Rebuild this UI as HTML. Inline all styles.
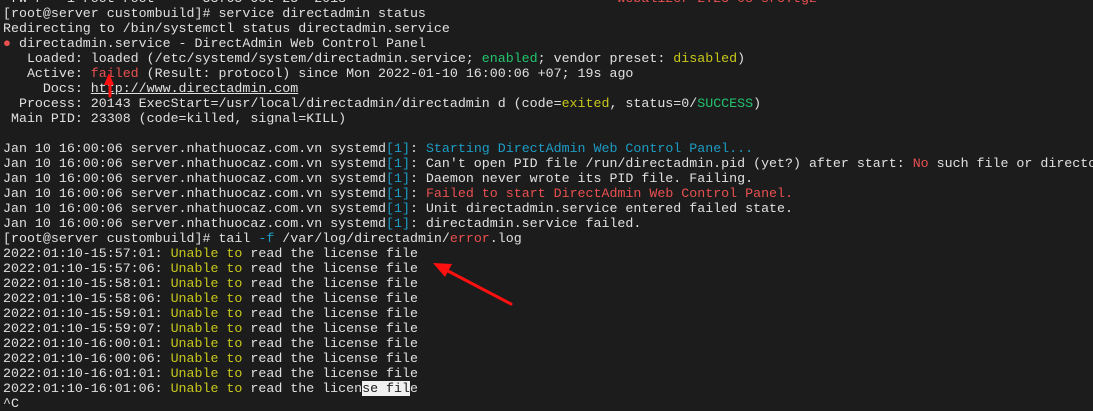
<!DOCTYPE html>
<html><head><meta charset="utf-8"><style>
html,body{margin:0;padding:0;background:#1c1c1c;width:1093px;height:409px;overflow:hidden}
pre{position:absolute;left:3px;top:-9px;margin:0;font-family:"Liberation Mono","DejaVu Sans Mono",monospace;font-size:13.3px;line-height:15px;color:#e0e0e0;white-space:pre}
.r{color:#e85050}.g{color:#22c46e}.y{color:#c8c81c}.c{color:#1c9cc4}
.u{text-decoration:underline}
.sel{background:#f0f0f0;color:#1c1c1c}
svg{position:absolute;left:0;top:0}
</style></head><body>
<pre>-rw-r-- 1 root root      53765 Oct 25  2018                                  <span class="r">webalizer-2.23-08-src.tgz</span>
[root@server custombuild]# service directadmin status
Redirecting to /bin/systemctl status directadmin.service
<span class="r">●</span> directadmin.service - DirectAdmin Web Control Panel
   Loaded: loaded (/etc/systemd/system/directadmin.service; <span class="g">enabled</span>; vendor preset: <span class="y">disabled</span>)
   Active: <span class="r">failed</span> (Result: protocol) since Mon 2022-01-10 16:00:06 +07; 19s ago
     Docs: <span class="u">http://www.directadmin.com</span>
  Process: 20143 ExecStart=/usr/local/directadmin/directadmin d (code=<span class="y">exited</span>, status=0/<span class="g">SUCCESS</span>)
 Main PID: 23308 (code=killed, signal=KILL)

Jan 10 16:00:06 server.nhathuocaz.com.vn systemd<span class="c">[1]</span>: <span class="c">Starting DirectAdmin Web Control Panel...</span>
Jan 10 16:00:06 server.nhathuocaz.com.vn systemd<span class="c">[1]</span>: Can't open PID file /run/directadmin.pid (yet?) after start: <span class="r">No</span> such file or directory
Jan 10 16:00:06 server.nhathuocaz.com.vn systemd<span class="c">[1]</span>: Daemon never wrote its PID file. Failing.
Jan 10 16:00:06 server.nhathuocaz.com.vn systemd<span class="c">[1]</span>: <span class="r">Failed to start DirectAdmin Web Control Panel.</span>
Jan 10 16:00:06 server.nhathuocaz.com.vn systemd<span class="c">[1]</span>: Unit directadmin.service entered failed state.
Jan 10 16:00:06 server.nhathuocaz.com.vn systemd<span class="c">[1]</span>: directadmin.service failed.
[root@server custombuild]# tail <span class="c">-f</span> /var/log/directadmin/<span class="r">error</span>.log
2022:01:10-15:57:01: <span class="y">Unable to</span> read the license file
2022:01:10-15:57:06: <span class="y">Unable to</span> read the license file
2022:01:10-15:58:01: <span class="y">Unable to</span> read the license file
2022:01:10-15:58:06: <span class="y">Unable to</span> read the license file
2022:01:10-15:59:01: <span class="y">Unable to</span> read the license file
2022:01:10-15:59:07: <span class="y">Unable to</span> read the license file
2022:01:10-16:00:01: <span class="y">Unable to</span> read the license file
2022:01:10-16:00:06: <span class="y">Unable to</span> read the license file
2022:01:10-16:01:01: <span class="y">Unable to</span> read the license file
2022:01:10-16:01:06: <span class="y">Unable to</span> read the licen<span class="sel">se fil</span>e
^C</pre>
<svg width="1093" height="409">
<line x1="511" y1="304" x2="448" y2="271" stroke="#ff1010" stroke-width="3" stroke-linecap="round"/>
<polygon points="433,263 452,264 445,277" fill="#ff1010"/>
<line x1="110" y1="96" x2="110" y2="82" stroke="#ff1010" stroke-width="3" stroke-linecap="round"/>
<polygon points="109,73 104,85 114,85" fill="#ff1010"/>
</svg>
</body></html>
